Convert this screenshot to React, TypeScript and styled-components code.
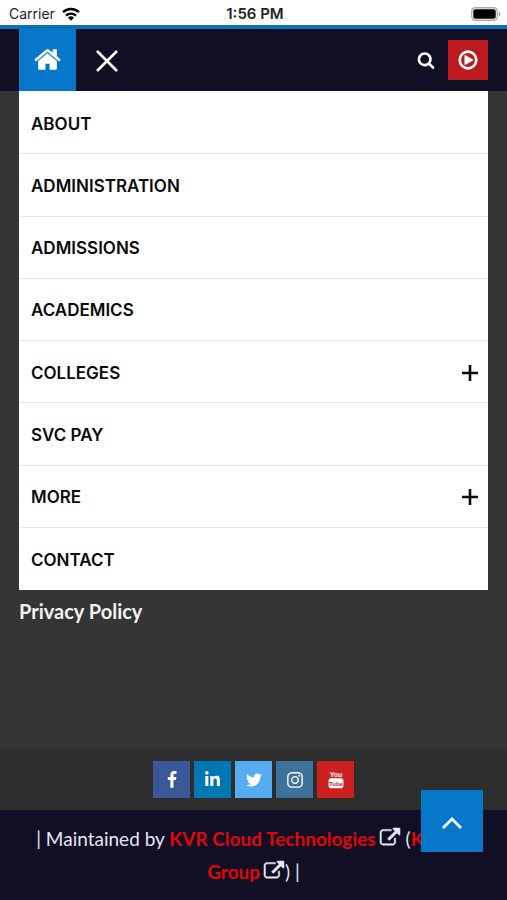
import React from "react";
import styled, { createGlobalStyle } from "styled-components";
import { FaInstagram, FaLinkedinIn } from "react-icons/fa";

const GlobalStyle = createGlobalStyle`
  * { box-sizing: border-box; }
  body { margin: 0; background: #353535; }
  button { font: inherit; border: 0; padding: 0; cursor: pointer; }
  a { text-decoration: none; }
`;

const Page = styled.div`
  min-height: 100vh;
  display: flex;
  flex-direction: column;
  background: #353535;
  font-family: Lato, sans-serif;
`;

const StatusBar = styled.div`
  display: grid;
  grid-template-columns: 1fr auto 1fr;
  align-items: center;
  height: 25px;
  padding: 2px 6px 0 9px;
  background: #fff;
  color: #222;
  font: 400 14px/20px Inter, sans-serif;
`;

const Carrier = styled.span`
  display: flex;
  align-items: center;
  gap: 7px;
`;

const Clock = styled.span`
  font-size: 15px;
  font-weight: 600;
`;

const Battery = styled.span`
  display: flex;
  justify-content: flex-end;
`;

const Header = styled.header`
  display: flex;
  align-items: center;
  height: 66px;
  padding: 0 19px;
  border-top: 4px solid #0b70b7;
  background: #110f24;
  color: #fff;
`;

const HomeLink = styled.a`
  display: grid;
  place-items: center;
  align-self: stretch;
  width: 57px;
  padding-bottom: 2px;
  background: #0777c9;
  color: #fff;
`;

const HeaderButton = styled.button<{ $fill?: string }>`
  display: grid;
  place-items: center;
  width: 40px;
  height: 40px;
  background: ${(p) => p.$fill ?? "transparent"};
  color: #fff;
`;

const CloseButton = styled(HeaderButton)`
  margin: 0 auto 0 11px;
`;

const SearchButton = styled(HeaderButton)`
  width: 44px;
`;

const Main = styled.main`
  flex: 1;
  padding: 0 19px;
`;

const Menu = styled.ul`
  display: grid;
  grid-auto-rows: 1fr;
  min-height: 499px;
  margin: 0;
  padding: 1px 0 0;
  list-style: none;
  background: #fff;
`;

const MenuRow = styled.li`
  display: flex;
  align-items: center;
  justify-content: space-between;
  padding: 2px 9px 0 12px;
  border-bottom: 1px solid #e6e6e6;

  &:last-child {
    border-bottom: 0;
  }
`;

const MenuLink = styled.a`
  color: #0b0b0b;
  font: 600 17px/24px Inter, sans-serif;
`;

const ExpandButton = styled.button`
  display: grid;
  place-items: center;
  width: 18px;
  height: 24px;
  background: transparent;
  color: #0b0b0b;
`;

const PolicyLink = styled.a`
  display: inline-block;
  padding-top: 8px;
  color: #f2f2f2;
  font-size: 20px;
  line-height: 26px;
  font-weight: 700;
`;

const SocialBar = styled.nav`
  display: flex;
  justify-content: center;
  gap: 4px;
  padding: 13px 0 12px;
  background: #2e2e2e;
`;

const SocialLink = styled.a<{ $fill: string }>`
  display: grid;
  place-items: center;
  width: 37px;
  height: 37px;
  background: ${(p) => p.$fill};
  color: #fff;
`;

const Footer = styled.footer`
  min-height: 90px;
  padding: 12px 19px;
  background: #110f24;
  color: #e6e6f0;
  font-size: 19px;
  line-height: 33px;
  text-align: center;
`;

const CreditLink = styled.a`
  color: #e0060c;
  font-weight: 700;
`;

const ExternalMark = styled.span`
  margin: 0 1px 0 4px;

  svg {
    overflow: visible;
    stroke: currentColor;
    stroke-width: 50px;
    vertical-align: -2px;
  }
`;

const TopButton = styled.button`
  position: fixed;
  right: 24px;
  bottom: 48px;
  display: grid;
  place-items: center;
  width: 62px;
  height: 62px;
  padding-top: 4px;
  background: #0777c9;
  color: #fff;
`;

const Glyph = ({ d, size }: { d: string; size: number }) => (
  <svg width={size} height={size} viewBox="0 0 1792 1792" fill="currentColor" aria-hidden="true">
    <path d={d} />
  </svg>
);

const HOME =
  "M1472 992v480q0 26-19 45t-45 19h-384v-384h-256v384h-384q-26 0-45-19t-19-45v-480q0-1 .5-3t.5-3l575-474 575 474q1 2 1 6zm223-69l-62 74q-8 9-21 11h-3q-13 0-21-7l-692-577-692 577q-12 8-24 7-13-2-21-11l-62-74q-8-10-7-23.5t11-21.5l719-599q32-26 76-26t76 26l244 204v-195q0-14 9-23t23-9h192q14 0 23 9t9 23v408l219 182q10 8 11 21.5t-7 23.5z";
const SEARCH =
  "M1216 832q0-185-131.5-316.5t-316.5-131.5-316.5 131.5-131.5 316.5 131.5 316.5 316.5 131.5 316.5-131.5 131.5-316.5zm512 832q0 52-38 90t-90 38q-54 0-90-38l-343-342q-179 124-399 124-143 0-273.5-55.5t-225-150-150-225-55.5-273.5 55.5-273.5 150-225 225-150 273.5-55.5 273.5 55.5 225 150 150 225 55.5 273.5q0 220-124 399l343 343q37 37 37 90z";
const FACEBOOK =
  "M1343 12v264h-157q-86 0-116 36t-30 108v189h293l-39 296h-254v759h-306v-759h-255v-296h255v-218q0-186 104-288.5t277-102.5q147 0 228 12z";
const TWITTER =
  "M1684 408q-67 98-162 167 1 14 1 42 0 130-38 259.5t-115.5 248.5-184.5 210.5-258 146-323 54.5q-271 0-496-145 35 4 78 4 225 0 401-138-105-2-188-64.5t-114-159.5q33 5 61 5 43 0 85-11-112-23-185.5-111.5t-73.5-205.5v-4q68 38 146 41-66-44-105-115t-39-154q0-88 44-163 121 149 294.5 238.5t371.5 99.5q-8-38-8-74 0-134 94.5-228.5t228.5-94.5q140 0 236 102 109-21 205-78-37 115-142 178 93-10 186-50z";
const EXTERNAL =
  "M1408 928v320q0 119-84.5 203.5t-203.5 84.5h-832q-119 0-203.5-84.5t-84.5-203.5v-832q0-119 84.5-203.5t203.5-84.5h704q14 0 23 9t9 23v64q0 14-9 23t-23 9h-704q-66 0-113 47t-47 113v832q0 66 47 113t113 47h832q66 0 113-47t47-113v-320q0-14 9-23t23-9h64q14 0 23 9t9 23zm384-864v512q0 26-19 45t-45 19-45-19l-176-176-652 652q-10 10-23 10t-23-10l-114-114q-10-10-10-23t10-23l652-652-176-176q-19-19-19-45t19-45 45-19h512q26 0 45 19t19 45z";

const WifiIcon = () => (
  <svg width="18" height="14" viewBox="0 0 18 14" fill="none" stroke="#000" strokeWidth="2.4" aria-hidden="true">
    <path d="M1 5.2a11.6 11.6 0 0 1 16 0" />
    <path d="M4 8.6a7.2 7.2 0 0 1 10 0" />
    <path d="M9 13.8 6 10.8a4.3 4.3 0 0 1 6 0z" fill="#000" stroke="none" />
  </svg>
);

const BatteryIcon = () => (
  <svg width="30" height="14" viewBox="0 0 30 14" aria-hidden="true">
    <rect x="0.75" y="0.75" width="25.5" height="12.5" rx="3.5" fill="#fff" stroke="#aaa" strokeWidth="1.3" />
    <rect x="2.3" y="2.3" width="22.4" height="9.4" rx="2" fill="#000" />
    <path d="M27.6 4.6q2 .8 2 2.4t-2 2.4z" fill="#aaa" />
  </svg>
);

const CloseIcon = () => (
  <svg width="24" height="24" viewBox="0 0 24 24" stroke="currentColor" strokeWidth="2.6" aria-hidden="true">
    <path d="M2 3l20 20M22 3L2 23" />
  </svg>
);

const PlayIcon = () => (
  <svg width="20" height="20" viewBox="0 0 20 20" aria-hidden="true">
    <circle cx="10" cy="10" r="8.3" fill="none" stroke="currentColor" strokeWidth="2.7" />
    <path d="M7 5.4v9.2l8-4.6z" fill="currentColor" stroke="currentColor" strokeLinejoin="round" />
  </svg>
);

const PlusIcon = () => (
  <svg width="18" height="18" viewBox="0 0 18 18" stroke="currentColor" strokeWidth="2.6" aria-hidden="true">
    <path d="M1 9h16M9 1v16" />
  </svg>
);

const YoutubeIcon = () => (
  <svg width="16" height="19" viewBox="0 0 16 19" aria-hidden="true">
    <g fontFamily="Liberation Sans Narrow, Liberation Sans, sans-serif" fontWeight="700" textAnchor="middle">
      <text x="8" y="7.2" fontSize="7" fill="#fff">You</text>
      <rect x="0.6" y="8.3" width="14.8" height="10" rx="2.2" fill="#fff" />
      <text x="8" y="15.6" fontSize="6" fill="#cd201f">Tube</text>
    </g>
  </svg>
);

const ChevronUp = () => (
  <svg width="20" height="12" viewBox="0 0 20 12" fill="none" stroke="currentColor" strokeWidth="2.7" aria-hidden="true">
    <path d="M1 11l9-9 9 9" />
  </svg>
);

const items = [
  { label: "ABOUT" },
  { label: "ADMINISTRATION" },
  { label: "ADMISSIONS" },
  { label: "ACADEMICS" },
  { label: "COLLEGES", expandable: true },
  { label: "SVC PAY" },
  { label: "MORE", expandable: true },
  { label: "CONTACT" },
];

const socials = [
  { name: "Facebook", fill: "#3b5998", icon: <Glyph d={FACEBOOK} size={18} /> },
  { name: "LinkedIn", fill: "#0077b5", icon: <FaLinkedinIn size={17} /> },
  { name: "Twitter", fill: "#55acee", icon: <Glyph d={TWITTER} size={18} /> },
  { name: "Instagram", fill: "#3f729b", icon: <FaInstagram size={18} /> },
  { name: "YouTube", fill: "#cd201f", icon: <YoutubeIcon /> },
];

export default function App() {
  return (
    <Page>
      <GlobalStyle />
      <StatusBar>
        <Carrier>
          Carrier <WifiIcon />
        </Carrier>
        <Clock>1:56 PM</Clock>
        <Battery>
          <BatteryIcon />
        </Battery>
      </StatusBar>
      <Header>
        <HomeLink href="#home" aria-label="Home">
          <Glyph d={HOME} size={29} />
        </HomeLink>
        <CloseButton type="button" aria-label="Close menu">
          <CloseIcon />
        </CloseButton>
        <SearchButton type="button" aria-label="Search">
          <Glyph d={SEARCH} size={18} />
        </SearchButton>
        <HeaderButton type="button" $fill="#bd1a1d" aria-label="Play video">
          <PlayIcon />
        </HeaderButton>
      </Header>
      <Main>
        <Menu>
          {items.map((item) => (
            <MenuRow key={item.label}>
              <MenuLink href="#menu">{item.label}</MenuLink>
              {item.expandable && (
                <ExpandButton type="button" aria-label={`Expand ${item.label}`}>
                  <PlusIcon />
                </ExpandButton>
              )}
            </MenuRow>
          ))}
        </Menu>
        <PolicyLink href="#privacy">Privacy Policy</PolicyLink>
      </Main>
      <SocialBar aria-label="Social links">
        {socials.map((s) => (
          <SocialLink key={s.name} href="#social" $fill={s.fill} aria-label={s.name}>
            {s.icon}
          </SocialLink>
        ))}
      </SocialBar>
      <Footer>
        | Maintained by <CreditLink href="#kvr">KVR Cloud Technologies</CreditLink>
        <ExternalMark>
          <Glyph d={EXTERNAL} size={20} />
        </ExternalMark>{" "}
        (<CreditLink href="#group">KVR IT Group</CreditLink>
        <ExternalMark>
          <Glyph d={EXTERNAL} size={20} />
        </ExternalMark>
        ) |
      </Footer>
      <TopButton type="button" aria-label="Back to top">
        <ChevronUp />
      </TopButton>
    </Page>
  );
}
